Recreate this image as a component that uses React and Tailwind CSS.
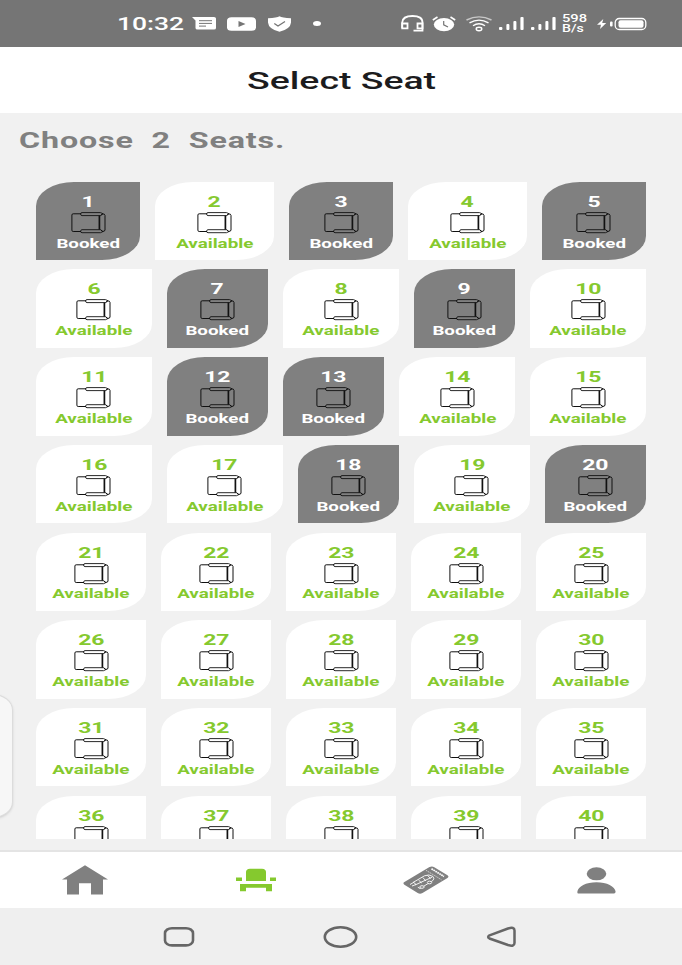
import React from "react";

const ROWS = [
  [1, 2, 3, 4, 5],
  [6, 7, 8, 9, 10],
  [11, 12, 13, 14, 15],
  [16, 17, 18, 19, 20],
  [21, 22, 23, 24, 25],
  [26, 27, 28, 29, 30],
  [31, 32, 33, 34, 35],
];
const PARTIAL_ROW = [36, 37, 38, 39, 40];
const BOOKED = new Set([1, 3, 5, 7, 9, 12, 13, 18, 20]);

function SeatOutline() {
  return (
    <svg className="block h-[22px] w-[35px]" viewBox="0 0 35 22" fill="none" stroke="#111" strokeWidth="1">
      <path d="M10 1.8H2.2Q.9 1.8 .9 3V18.2Q.9 19.5 2.2 19.5H10" />
      <path d="M11 .6H29.5L32 1.8L29.5 3.6H11Q9.6 3.4 9.6 2.1Q9.6 .6 11 .6Z" strokeWidth=".9" />
      <path d="M11 20.7H29.5L32 19.5L29.5 17.7H11Q9.6 17.9 9.6 19.2Q9.6 20.7 11 20.7Z" strokeWidth=".9" />
      <path d="M28.4 3.6V17.6" strokeWidth="1.7" />
      <path d="M29.8 3.5L31.4 1.8Q34 1.8 34 3.4V18Q34 19.5 31.4 19.5L29.8 17.8" />
    </svg>
  );
}

function Seat({ n, partial }) {
  const booked = BOOKED.has(n);
  return (
    <div
      className={
        "flex h-[78.4px] shrink-0 grow flex-col items-center rounded-[38px_0/24px_0] " +
        (booked ? "basis-[75.4px] bg-[#808080] text-white" : "basis-[90px] bg-white text-[#85c92e]")
      }
    >
      <span className="mt-3 block h-[17px] scale-x-[1.58] text-[14.5px] leading-[17px] font-bold">{n}</span>
      <div className="mt-px">
        <SeatOutline />
      </div>
      {!partial && (
        <span className="mt-[0.8px] block h-[18px] scale-x-[1.5] text-[12.5px] leading-[18px] font-bold">
          {booked ? "Booked" : "Available"}
        </span>
      )}
    </div>
  );
}

function Signal() {
  return (
    <svg className="h-[14px] w-[25px]" viewBox="0 0 25 14" fill="#fff">
      <rect x="0" y="10" width="3.4" height="3" rx="1" />
      <rect x="7.4" y="7" width="3" height="6" rx="1" />
      <rect x="14.4" y="4" width="3" height="9" rx="1" />
      <rect x="21.4" y="0" width="3.2" height="13" rx="1" />
    </svg>
  );
}

function StatusBar() {
  return (
    <div className="flex h-[47px] shrink-0 items-center bg-[#757575] pl-[117px] text-white">
      <div className="w-[75px] pt-0.5">
        <span className="inline-block origin-left scale-x-[1.47] text-[18px] leading-none font-medium">10:32</span>
      </div>
      <svg className="h-[13px] w-6" viewBox="0 0 24 13">
        <path d="M0 0H22Q24 0 24 1.5V11Q24 12.5 22 12.5H5.5Q3.5 12.5 3.5 11V3.5Z" fill="#fff" />
        <path d="M7 3.7H20M7 6.4H20M7 9.1H14" stroke="#757575" strokeWidth="1" />
      </svg>
      <svg className="ml-[11px] h-[14px] w-[29px]" viewBox="0 0 29 14">
        <rect y=".3" width="29" height="13.4" rx="4.5" ry="3.5" fill="#fff" />
        <path d="M11.5 4L18.5 7L11.5 10Z" fill="#757575" />
      </svg>
      <svg className="ml-3 h-4 w-[23px]" viewBox="0 0 23 16">
        <path d="M11.5 .2Q14 1.7 23 2.2V6.5Q22.5 13 11.5 15.8Q.5 13 0 6.5V2.2Q9 1.7 11.5 .2Z" fill="#fff" />
        <path d="M6.3 7.5L10 10L17 5.5" stroke="#757575" strokeWidth="1.3" fill="none" />
      </svg>
      <span className="ml-[22px] h-[5px] w-2 rounded-[50%] bg-white" />
      <svg className="ml-20 h-[17px] w-[23px]" viewBox="0 0 23 17" fill="none" stroke="#fff" strokeWidth="1.8">
        <path d="M1.2 13V7.5Q1.5 1 11.5 1Q21.5 1 21.5 7.5V15.7H12.5" />
        <path d="M1.2 8.5H6.5V13.3H1.2ZM21.5 8.5H16.5V13.3H21.5Z" />
      </svg>
      <svg className="ml-2 h-4 w-6" viewBox="0 0 24 16">
        <ellipse cx="12" cy="8.6" rx="10.2" ry="6.6" fill="#fff" />
        <path d="M.8 4L5.5 1M23.2 4L18.5 1" stroke="#fff" strokeWidth="1.6" />
        <path d="M11.7 5V8.8L16 11" stroke="#757575" strokeWidth="1.2" fill="none" />
      </svg>
      <svg className="ml-2.5 h-4 w-[26px]" viewBox="0 0 26 16" fill="none" stroke="#fff" strokeWidth="1.4">
        <path d="M.5 4Q13-2.2 25.5 4" opacity=".6" />
        <path d="M3.5 6.8Q13 1.5 22.5 6.8M7 9.8Q13 5.6 19 9.8" />
        <ellipse cx="13" cy="13" rx="2.8" ry="1.7" />
      </svg>
      <div className="ml-[7px] flex gap-[7px]">
        <Signal />
        <Signal />
      </div>
      <div className="ml-1.5 w-[35px] pt-px text-[10px] leading-[10px] font-medium">
        <span className="block w-max origin-left scale-x-[1.47]">598</span>
        <span className="block w-max origin-left scale-x-[1.42]">B/s</span>
      </div>
      <svg className="h-[14px] w-[51px]" viewBox="0 0 51 14">
        <path d="M6.3 2L0 7.8H4L3 12L9.2 6H5.2Z" fill="#fff" />
        <rect x="13" y="4.5" width="2.6" height="5" rx="1" fill="#fff" />
        <rect x="18.2" y="1.5" width="30.6" height="11" rx="4" fill="none" stroke="#fff" strokeWidth="1.3" />
        <rect x="21.5" y="3.2" width="25" height="7.6" rx="2" fill="#fff" />
      </svg>
    </div>
  );
}

function TicketIcon() {
  return (
    <svg className="h-7 w-[46px]" viewBox="0 0 46 28">
      <path
        d="M1 16.3L26.5 1.1Q29 -.2 31.3 1.2L44.5 9.2Q46.4 10.5 44.5 12L19.5 27Q17 28.4 14.7 27L1.4 18.8Q-.3 17.5 1 16.3Z"
        fill="#808080"
      />
      <g fill="none" stroke="#fff" strokeWidth=".9">
        <path d="M23 4.3L38.5 13.8" strokeDasharray="1.5 .7" strokeWidth=".6" />
        <path d="M28.5 2.8L41 10.5" strokeWidth="1.7" strokeDasharray="1.7 .6" />
        <path d="M7 18.5L11 16.2M9 20L13 18.5L10.5 16.2L21.5 9.8Q26 7.8 30 10.5Q32 13 29.5 14.8L17 22.5L14.8 21.2" />
        <path d="M12.5 18.8L29 11.2M15.5 14L18.7 17M19.8 11.5L23 15M24.5 9.3L27.5 12.5" />
        <ellipse cx="19" cy="21" rx="2.2" ry="1.3" fill="#808080" />
        <ellipse cx="26.5" cy="16.5" rx="2.2" ry="1.3" fill="#808080" />
      </g>
    </svg>
  );
}

function BottomNav() {
  return (
    <div className="grid h-14 shrink-0 grid-cols-4 items-center justify-items-center bg-white">
      <svg className="h-[30px] w-[46px]" viewBox="0 0 46 30" fill="#808080">
        <path d="M23 .3L46 14.6H41V29.5H29V18.3H17V29.5H5V14.6H0Z" />
      </svg>
      <svg className="h-6 w-10" viewBox="0 0 40 24" fill="#85c92e">
        <path d="M10 13V4Q10 1 14 .7H26Q30 1 30 4V13ZM0 9.5H6V13H0ZM34 9.5H40V13H34ZM4 16H36V23.3H30V19.7H10V23.3H4Z" />
      </svg>
      <TicketIcon />
      <svg className="h-[27px] w-[39px]" viewBox="0 0 39 27" fill="#808080">
        <ellipse cx="19.5" cy="6.8" rx="9.8" ry="6.5" />
        <path d="M.4 26.5V24.5C1 19.5 9 15.2 19.5 15.2S38 19.5 38.6 24.5Q38.6 26.5 37 26.5H2Q.8 26.5 .4 26Z" />
      </svg>
    </div>
  );
}

export default function App() {
  return (
    <div className="relative flex h-[965px] w-[682px] flex-col overflow-hidden bg-[#f1f1f1] font-['Roboto',sans-serif]">
      <StatusBar />
      <header className="flex h-[66px] shrink-0 items-center justify-center bg-white pt-[2px] pl-px">
        <h1 className="scale-x-[1.56] text-[24px] leading-none font-medium text-[#1c1c1e]">Select Seat</h1>
      </header>
      <main className="flex h-[726px] shrink-0 flex-col overflow-hidden">
        <div className="flex h-[68.8px] shrink-0 pt-4 pl-[19px]">
          <p className="h-6 w-max origin-left scale-x-[1.465] text-[22px] leading-6 font-bold tracking-[0.6px] whitespace-pre text-[#808080]">
            Choose  2  Seats.
          </p>
        </div>
        <div className="flex flex-col gap-[9.3px] px-9">
          {ROWS.map((row) => (
            <div key={row[0]} className="flex shrink-0 gap-[15px]">
              {row.map((n) => (
                <Seat key={n} n={n} />
              ))}
            </div>
          ))}
          <div className="flex shrink-0 gap-[15px]">
            {PARTIAL_ROW.map((n) => (
              <Seat key={n} n={n} partial />
            ))}
          </div>
        </div>
      </main>
      <div className="h-[13px] shrink-0 border-b-2 border-[#e4e4e4]" />
      <BottomNav />
      <div className="flex h-[57px] shrink-0 items-center justify-center gap-[128px] bg-[#efefef] pr-px">
        <svg className="h-[22px] w-8" viewBox="0 0 32 22" fill="none" stroke="#666">
          <rect x="2" y="2.2" width="28" height="17.2" rx="7" ry="5" strokeWidth="2.6" />
        </svg>
        <svg className="h-[22px] w-[35px]" viewBox="0 0 35 22" fill="none" stroke="#666">
          <ellipse cx="17.5" cy="11" rx="15.7" ry="9.7" strokeWidth="2.6" />
        </svg>
        <svg className="h-[22px] w-8" viewBox="0 0 32 22" fill="none" stroke="#666">
          <path d="M3.5 9.3L22 2.5Q28.5 .5 28.5 4.5V17Q28.5 21 22 19L3.5 12.5Q.8 11 3.5 9.3Z" strokeWidth="2.5" />
        </svg>
      </div>
      <div className="absolute top-[694px] -left-8 h-[124px] w-[45px] rounded-[20px/16px] border border-[#dcdcdc] bg-[#f7f7f7] shadow-sm" />
    </div>
  );
}
